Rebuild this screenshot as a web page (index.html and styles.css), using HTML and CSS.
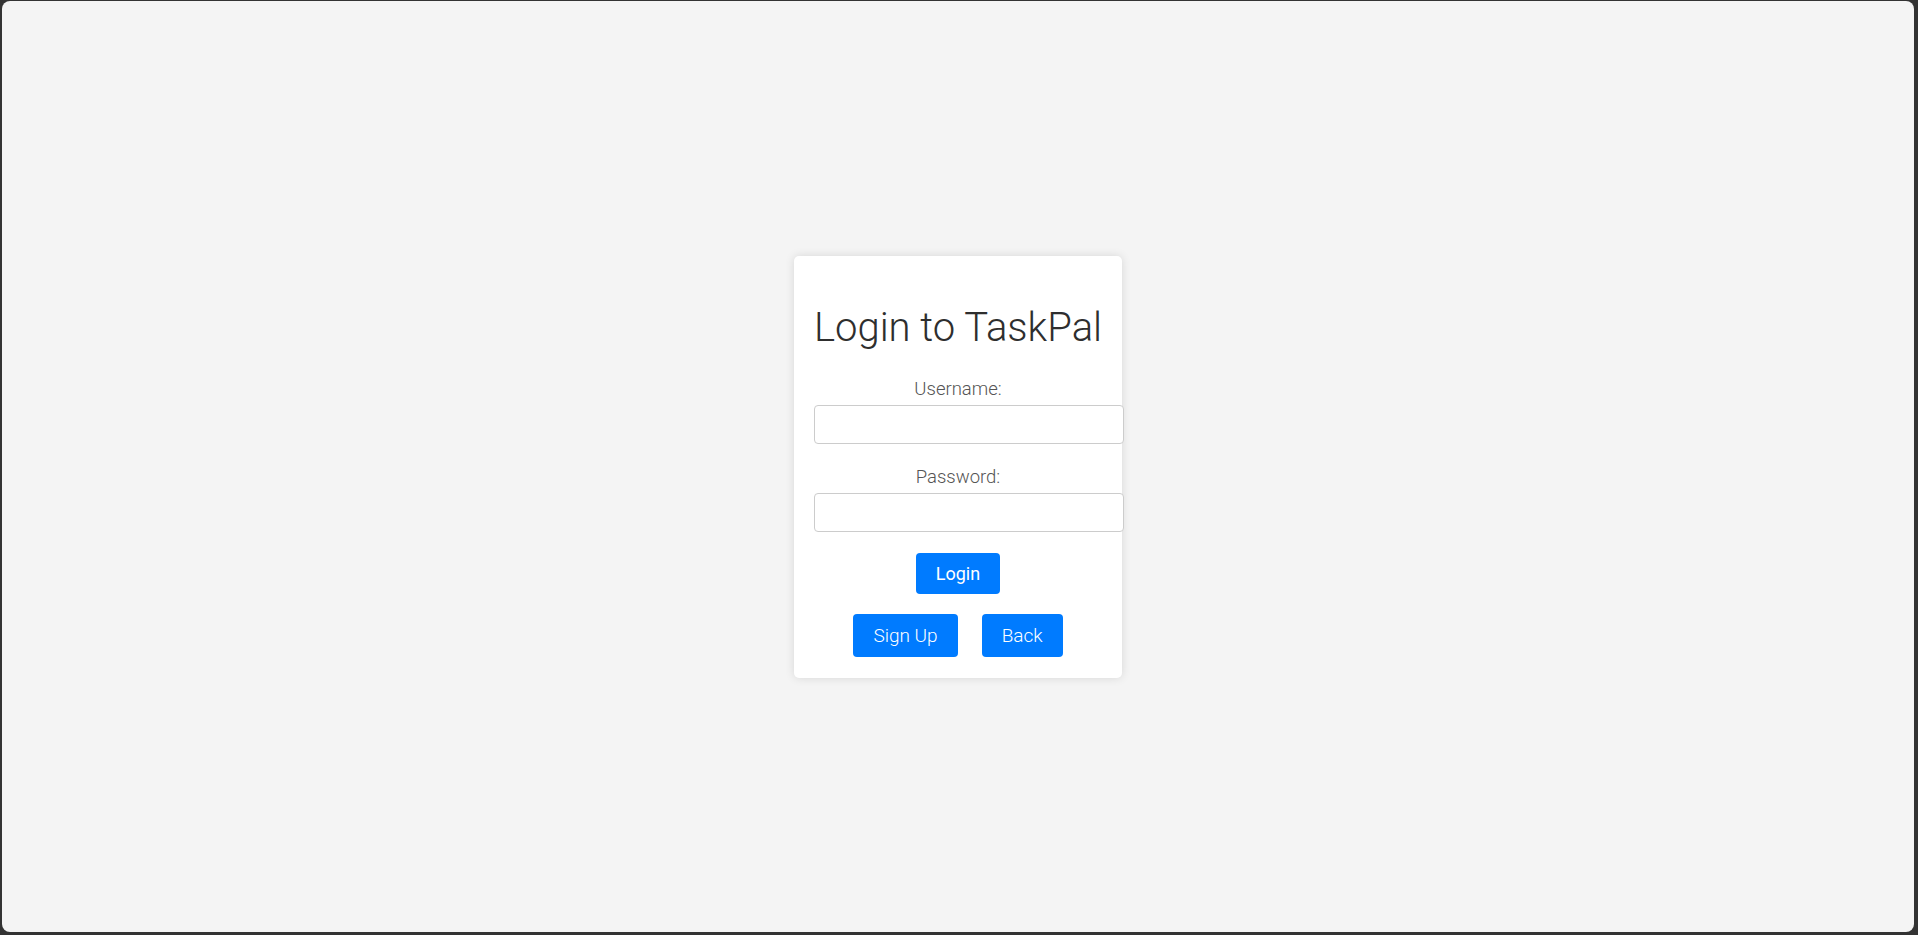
FILE: index.html
```html
<!DOCTYPE html>
<html lang="en">
<head>
<meta charset="utf-8">
<title>Login to TaskPal</title>
<link rel="stylesheet" href="styles.css">
</head>
<body>
<div class="frame">
  <div class="card">
    <h1 class="title">Login to TaskPal</h1>
    <form class="form">
      <div class="group">
        <label class="label" for="username">Username:</label>
        <input class="input" id="username" type="text">
      </div>
      <div class="group">
        <label class="label" for="password">Password:</label>
        <input class="input" id="password" type="password">
      </div>
      <div class="row">
        <button class="btn btn-login" type="button">Login</button>
      </div>
      <div class="row row-links">
        <button class="btn btn-light" type="button">Sign Up</button>
        <button class="btn btn-light" type="button">Back</button>
      </div>
    </form>
  </div>
</div>
</body>
</html>
```

FILE: styles.css
```css
html, body {
  margin: 0;
  padding: 0;
  height: 100%;
  background: #333333;
}
body {
  font-family: Roboto, "Liberation Sans", sans-serif;
  color: #333;
}
.frame {
  box-sizing: border-box;
  margin: 1px 4px 3px 2px;
  height: 931px;
  background: #f4f4f4;
  border-radius: 8px;
  display: flex;
  align-items: center;
  justify-content: center;
}
.card {
  width: 288px;
  padding: 20px 20px 21px;
  background: #fff;
  border-radius: 5px;
  box-shadow: 0 0 10px rgba(0, 0, 0, 0.12);
  text-align: center;
}
.title {
  margin: 27px -20px 25px;
  font-size: 40px;
  line-height: 50px;
  font-weight: 300;
  white-space: nowrap;
  color: #2e2e2e;
}
.form {
  margin: 0;
}
.group {
  margin-bottom: 22px;
}
.label {
  display: block;
  font-size: 18.5px;
  line-height: 22px;
  font-weight: 300;
  color: #555;
  margin-bottom: 5px;
}
.input {
  display: block;
  width: 100%;
  height: 17px;
  padding: 10px;
  margin: 0;
  border: 1px solid #ccc;
  border-radius: 4px;
  font-family: inherit;
  font-size: 16px;
  background: #fff;
}
.row {
  display: flex;
  justify-content: center;
  gap: 24px;
}
.row-links {
  margin-top: 20px;
}
.btn {
  border: none;
  border-radius: 4px;
  background: #007bff;
  color: #fff;
  font-family: inherit;
  cursor: pointer;
}
.btn-login {
  margin-top: -1px;
  height: 41px;
  padding: 0 20px;
  font-size: 18px;
  font-weight: 400;
}
.btn-light {
  height: 43px;
  padding: 0 20px;
  font-size: 19px;
  font-weight: 300;
}
```
